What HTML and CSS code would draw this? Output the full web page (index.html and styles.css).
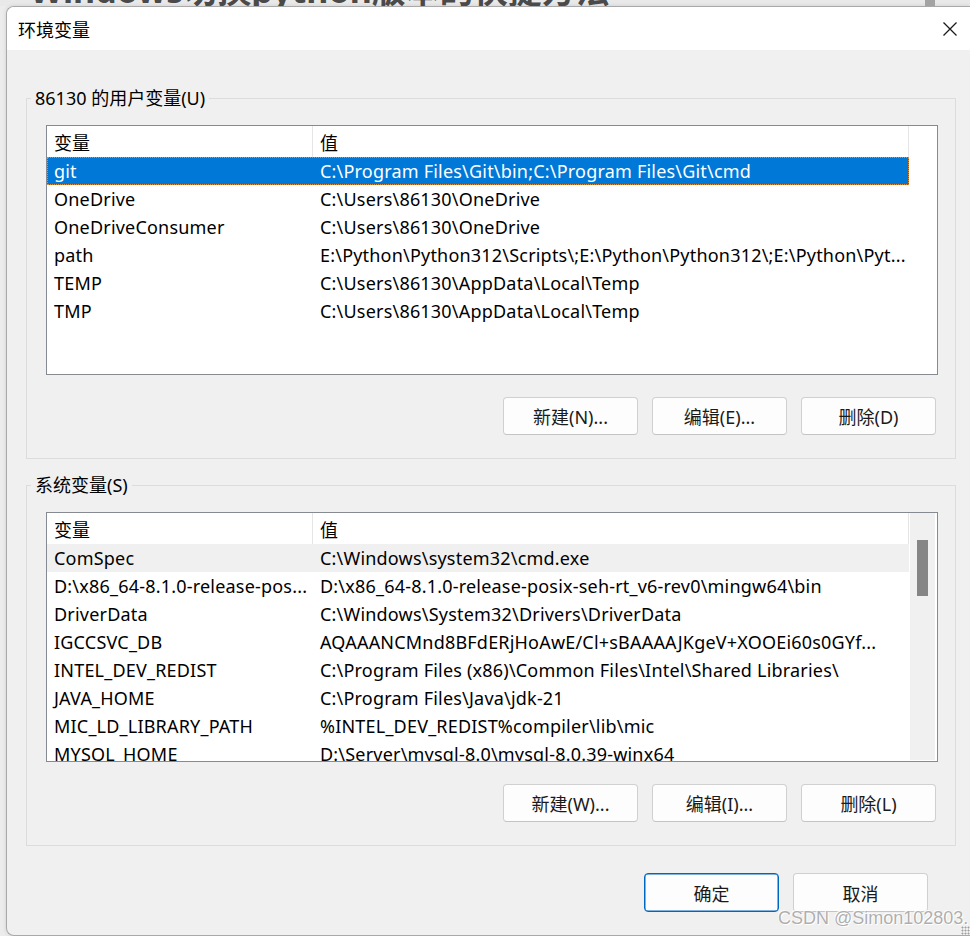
FILE: index.html
```html
<!DOCTYPE html>
<html lang="zh-CN">
<head>
    <meta charset="UTF-8">
    <title>环境变量</title>
    <link rel="stylesheet" href="styles.css">
</head>
<body>
    <div class="page-strip">
        <div class="page-title">Windows切换python版本的快捷方法</div>
        <div class="page-scroll"></div>
    </div>

    <div class="dialog">
        <div class="titlebar">
            <span class="title">环境变量</span>
            <svg class="close" width="14" height="14" viewBox="0 0 14 14">
                <path d="M0.5 0.5 L13.5 13.5 M13.5 0.5 L0.5 13.5" stroke="#1a1a1a" stroke-width="1.3" fill="none"/>
            </svg>
        </div>

        <div class="group">
            <div class="group-title">86130 的用户变量(U)</div>
            <div class="list">
                <div class="list-main">
                    <div class="list-head">
                        <div class="col-name">变量</div>
                        <div class="col-value">值</div>
                    </div>
                    <div class="row selected">
                        <div class="col-name">git</div>
                        <div class="col-value">C:\Program Files\Git\bin;C:\Program Files\Git\cmd</div>
                    </div>
                    <div class="row">
                        <div class="col-name">OneDrive</div>
                        <div class="col-value">C:\Users\86130\OneDrive</div>
                    </div>
                    <div class="row">
                        <div class="col-name">OneDriveConsumer</div>
                        <div class="col-value">C:\Users\86130\OneDrive</div>
                    </div>
                    <div class="row">
                        <div class="col-name">path</div>
                        <div class="col-value">E:\Python\Python312\Scripts\;E:\Python\Python312\;E:\Python\Pyt...</div>
                    </div>
                    <div class="row">
                        <div class="col-name">TEMP</div>
                        <div class="col-value">C:\Users\86130\AppData\Local\Temp</div>
                    </div>
                    <div class="row">
                        <div class="col-name">TMP</div>
                        <div class="col-value">C:\Users\86130\AppData\Local\Temp</div>
                    </div>
                </div>
                <div class="list-side"></div>
            </div>
            <div class="buttons">
                <button class="btn">新建(N)...</button>
                <button class="btn">编辑(E)...</button>
                <button class="btn">删除(D)</button>
            </div>
        </div>

        <div class="group group-system">
            <div class="group-title">系统变量(S)</div>
            <div class="list">
                <div class="list-main">
                    <div class="list-head">
                        <div class="col-name">变量</div>
                        <div class="col-value">值</div>
                    </div>
                    <div class="row hover">
                        <div class="col-name">ComSpec</div>
                        <div class="col-value">C:\Windows\system32\cmd.exe</div>
                    </div>
                    <div class="row">
                        <div class="col-name">D:\x86_64-8.1.0-release-pos...</div>
                        <div class="col-value">D:\x86_64-8.1.0-release-posix-seh-rt_v6-rev0\mingw64\bin</div>
                    </div>
                    <div class="row">
                        <div class="col-name">DriverData</div>
                        <div class="col-value">C:\Windows\System32\Drivers\DriverData</div>
                    </div>
                    <div class="row">
                        <div class="col-name">IGCCSVC_DB</div>
                        <div class="col-value">AQAAANCMnd8BFdERjHoAwE/Cl+sBAAAAJKgeV+XOOEi60s0GYf...</div>
                    </div>
                    <div class="row">
                        <div class="col-name">INTEL_DEV_REDIST</div>
                        <div class="col-value">C:\Program Files (x86)\Common Files\Intel\Shared Libraries\</div>
                    </div>
                    <div class="row">
                        <div class="col-name">JAVA_HOME</div>
                        <div class="col-value">C:\Program Files\Java\jdk-21</div>
                    </div>
                    <div class="row">
                        <div class="col-name">MIC_LD_LIBRARY_PATH</div>
                        <div class="col-value">%INTEL_DEV_REDIST%compiler\lib\mic</div>
                    </div>
                    <div class="row">
                        <div class="col-name">MYSQL_HOME</div>
                        <div class="col-value">D:\Server\mysql-8.0\mysql-8.0.39-winx64</div>
                    </div>
                </div>
                <div class="list-side">
                    <div class="scroll-track">
                        <div class="scroll-thumb"></div>
                    </div>
                </div>
            </div>
            <div class="buttons">
                <button class="btn">新建(W)...</button>
                <button class="btn">编辑(I)...</button>
                <button class="btn">删除(L)</button>
            </div>
        </div>

        <div class="footer">
            <button class="btn btn-primary">确定</button>
            <button class="btn">取消</button>
        </div>
    </div>

    <div class="watermark">CSDN @Simon102803.</div>
    <div class="gripper"></div>
</body>
</html>
```

FILE: styles.css
```css
html, body {
    height: 100%;
}
body {
    margin: 0;
    background: #ececec;
    font-family: "Noto Sans", "Noto Sans CJK SC", sans-serif;
    font-size: 18px;
    color: #000;
    overflow: hidden;
    position: relative;
}
.page-strip {
    height: 6px;
    overflow: hidden;
    display: flex;
    background: #e9e9e9;
}
.page-title {
    font-family: "Noto Sans", "Noto Sans CJK SC", sans-serif;
    font-weight: bold;
    font-size: 34px;
    line-height: 34px;
    color: #4a4a4a;
    margin: -27px 0 0 30px;
    white-space: nowrap;
}
.page-scroll {
    width: 10px;
    margin-left: auto;
    margin-right: 35px;
    background: #a3a3a3;
}
.dialog {
    margin-left: 6px;
    height: 928px;
    background: #f0f0f0;
    border: 1px solid #a9a9a9;
    border-right: none;
    border-radius: 8px 0 0 8px;
    overflow: hidden;
    box-shadow: 0 0 4px rgba(0,0,0,0.12);
}
.titlebar {
    height: 43px;
    background: #fff;
    display: flex;
    align-items: center;
    padding: 0 13px 0 11px;
}
.title {
    font-size: 18px;
    flex: 1;
}
.close {
    display: block;
}
.group {
    margin: 48px 14px 0 19px;
    border: 1px solid #dcdcdc;
    padding: 0 17px 23px 19px;
}
.group-system {
    margin-top: 26px;
}
.group-title {
    display: table;
    margin: -13px 0 0 -15px;
    padding: 0 4px;
    line-height: 24px;
    background: #f0f0f0;
}
.list {
    margin-top: 15px;
    height: 248px;
    border: 1px solid #868a91;
    background: #fff;
    display: flex;
    overflow: hidden;
}
.list-main {
    width: 862px;
}
.list-side {
    flex: 1;
    display: flex;
}
.list-head {
    height: 31px;
    display: flex;
    align-items: center;
    border-right: 1px solid #e5e5e5;
}
.list-head .col-name {
    border-right: 1px solid #e5e5e5;
    align-self: stretch;
    display: flex;
    align-items: center;
}
.row {
    height: 28px;
    display: flex;
    align-items: center;
    box-sizing: border-box;
    letter-spacing: 0.2px;
}
.row.selected {
    background: #0078d7;
    color: #fff;
    border: 1px dotted #e08a3c;
}
.row.hover {
    background: #f0f0f0;
}
.col-name {
    width: 266px;
    box-sizing: border-box;
    padding-left: 7px;
    white-space: nowrap;
    overflow: hidden;
}
.col-value {
    flex: 1;
    padding-left: 7px;
    white-space: nowrap;
    overflow: hidden;
}
.row.selected .col-name {
    width: 265px;
    padding-left: 6px;
}
.scroll-track {
    flex: 1;
    margin: 0 2px 1px 1px;
    background: #f0f0f0;
    padding: 27px 7px 0 7px;
}
.scroll-thumb {
    height: 56px;
    background: #858585;
}
.buttons {
    display: flex;
    justify-content: flex-end;
    gap: 14px;
    margin-top: 22px;
    padding-right: 2px;
}
.btn {
    width: 135px;
    height: 38px;
    border: 1px solid #d0d0d0;
    border-bottom-color: #c4c4c4;
    border-radius: 4px;
    background: #fdfdfd;
    font-family: "Noto Sans", "Noto Sans CJK SC", sans-serif;
    font-size: 18px;
    color: #1a1a1a;
    padding: 0;
}
.footer {
    display: flex;
    justify-content: flex-end;
    gap: 14px;
    margin-top: 27px;
    padding-right: 42px;
}
.footer .btn {
    height: 39px;
}
.btn-primary {
    border: 1px solid #0067c0;
    box-shadow: inset 0 0 0 0.5px #0067c0;
}
.watermark {
    position: absolute;
    left: 778px;
    top: 908px;
    font-family: "Liberation Sans", Arial, sans-serif;
    font-size: 18px;
    color: rgba(160,160,160,0.85);
    text-shadow: 0 0 1px #fff, 1px 1px 0 #fff, -1px -1px 0 rgba(255,255,255,0.8);
    white-space: nowrap;
}
.gripper {
    position: absolute;
    right: 0;
    bottom: 1px;
    width: 9px;
    height: 9px;
    background: radial-gradient(circle, #a0a0a0 0.8px, transparent 1.2px) 0 0 / 3px 3px;
}
```
